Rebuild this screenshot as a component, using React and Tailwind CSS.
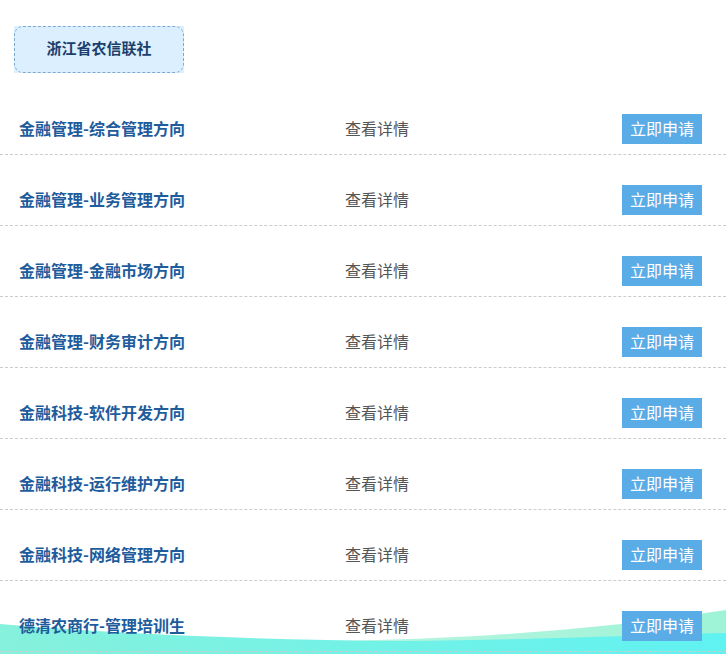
import React from "react";

const rows = [
  "金融管理-综合管理方向",
  "金融管理-业务管理方向",
  "金融管理-金融市场方向",
  "金融管理-财务审计方向",
  "金融科技-软件开发方向",
  "金融科技-运行维护方向",
  "金融科技-网络管理方向",
  "德清农商行-管理培训生",
];

export default function App() {
  return (
    <div
      className="relative w-[726px] h-[654px] overflow-hidden bg-white"
      style={{ fontFamily: '"Noto Sans CJK SC", "Noto Sans", sans-serif' }}
    >
      <svg
        className="absolute left-0 bottom-0 z-0"
        width="726"
        height="54"
        viewBox="0 0 726 54"
        preserveAspectRatio="none"
      >
        <defs>
          <linearGradient id="g1" x1="0" y1="0" x2="1" y2="0">
            <stop offset="0" stopColor="#86f1dc" />
            <stop offset="1" stopColor="#60f2f1" />
          </linearGradient>
          <linearGradient id="g2" x1="0" y1="0" x2="1" y2="0">
            <stop offset="0" stopColor="#b8f5e0" />
            <stop offset="1" stopColor="#9ef3d6" />
          </linearGradient>
        </defs>
        <path d="M330 41 C480 39 610 28 726 10 L726 54 L330 54 Z" fill="url(#g2)" />
        <path d="M0 24 C120 34 260 40 400 41 C530 40 640 35 726 33 L726 54 L0 54 Z" fill="url(#g1)" />
      </svg>

      <div className="relative z-10">
        <div className="pt-[26px] pl-[14px]">
          <div className="w-[170px] h-[47px] bg-[#dcefff]">
            <div className="w-full h-full rounded-[9px] border border-dashed border-[#7ea9cf] flex items-center justify-center pb-[2px] text-[15px] font-bold text-[#1b3f6d]">
              浙江省农信联社
            </div>
          </div>
        </div>

        <div className="mt-[11px]">
          {rows.map((r) => (
            <div
              key={r}
              className="flex items-center h-[71px] pt-[30px] pb-[10px] border-b border-dashed border-[#cccccc]"
            >
              <div className="w-[345px] pl-[19px] h-[30px] pb-[2px] flex items-center text-[16px] font-bold text-[#1e5c9c] whitespace-nowrap">
                {r}
              </div>
              <div className="flex-1 h-[30px] pb-[2px] flex items-center text-[16px] text-[#555555]">
                查看详情
              </div>
              <div className="mr-[24px] w-[80px] h-[30px] pb-[2px] bg-[#5aace6] text-white text-[16px] flex items-center justify-center">
                立即申请
              </div>
            </div>
          ))}
        </div>
      </div>
    </div>
  );
}
